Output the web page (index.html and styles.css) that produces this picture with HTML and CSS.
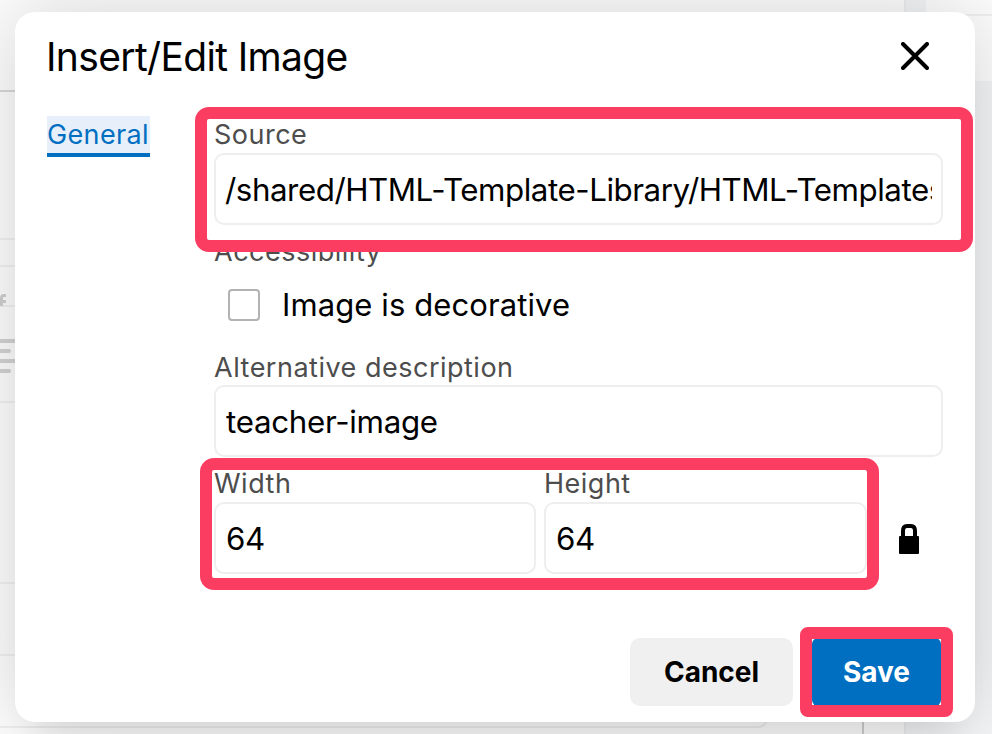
FILE: index.html
```
<!DOCTYPE html>
<html lang="en">
<head>
  <meta charset="utf-8">
  <title>Insert/Edit Image</title>
  <link rel="stylesheet" href="styles.css">
</head>
<body>
  <!-- editor page behind the dialog -->
  <svg class="backdrop" width="992" height="734" viewBox="0 0 992 734">
    <rect width="992" height="734" fill="#fdfdfd"/>
    <rect x="904" width="2" height="734" fill="#eeeeee"/>
    <rect x="906" width="20" height="734" fill="#f3f5f7"/>
    <rect x="926" y="81" width="66" height="653" fill="#f3f5f7"/>
    <rect x="926" y="14" width="66" height="2" fill="#f0f0f0"/>
    <rect y="90" width="30" height="2" fill="#d8d8d8"/>
    <g fill="#f1f1f1">
      <rect y="238" width="30" height="2"/>
      <rect y="265" width="30" height="2"/>
      <rect y="305" width="30" height="2"/>
      <rect y="401" width="30" height="2"/>
      <rect y="582" width="30" height="2"/>
      <rect y="654" width="30" height="2"/>
    </g>
    <path d="M0 727H757Q765 727 767 720" fill="none" stroke="#efefef" stroke-width="2"/>
    <rect x="862" y="715" width="2" height="19" fill="#cfcfcf"/>
    <g fill="#d3d3d3">
      <rect y="339" width="30" height="4"/>
      <rect x="-4" y="349" width="15" height="4" rx="2"/>
      <rect y="359" width="30" height="4"/>
      <rect x="-4" y="369" width="15" height="4" rx="2"/>
    </g>
    <path d="M6 295.500H4Q1.500 295.500 1.500 298V306M-2 301.500H6" fill="none" stroke="#cfcfcf" stroke-width="3"/>
  </svg>

  <div class="dialog">
    <div class="dialog-header">
      <h1>Insert/Edit Image</h1>
      <button class="btn-close" aria-label="Close">
        <svg width="28" height="28" viewBox="0 0 28 28">
          <path d="M2 2L26 26M26 2L2 26" stroke="#000" stroke-width="4" stroke-linecap="round"/>
        </svg>
      </button>
    </div>

    <div class="dialog-body">
      <div class="nav"><a class="tab">General</a></div>
      <form class="fields">
        <div class="form-group source">
          <label for="source">Source</label>
          <input type="text" id="source" value="/shared/HTML-Template-Library/HTML-Templates/images">
          <div class="mark mark-source"></div>
        </div>
        <div class="form-group">
          <label>Accessibility</label>
          <div class="check">
            <span class="box"></span>
            <span class="check-text">Image is decorative</span>
          </div>
        </div>
        <div class="form-group alt">
          <label for="alt">Alternative description</label>
          <input type="text" id="alt" value="teacher-image">
        </div>
        <div class="size">
          <div class="form-group">
            <label for="width">Width</label>
            <input type="text" id="width" value="64">
          </div>
          <div class="form-group">
            <label for="height">Height</label>
            <input type="text" id="height" value="64">
          </div>
          <svg class="lock" width="20" height="30" viewBox="0 0 20 30">
            <path d="M4 14V7Q4 2 8 2H12Q16 2 16 7V14" fill="none" stroke="#000" stroke-width="4"/>
            <rect y="12" width="20" height="18" rx="1" fill="#000"/>
          </svg>
          <div class="mark mark-size"></div>
        </div>
      </form>
    </div>

    <div class="dialog-footer">
      <button class="btn">Cancel</button>
      <div class="save">
        <button class="btn btn-save">Save</button>
        <div class="mark mark-save"></div>
      </div>
    </div>
  </div>
</body>
</html>
```

FILE: styles.css
```
* {
  box-sizing: border-box;
}

body {
  margin: 0;
  padding: 12px 17px 12px 15px;
  height: 734px;
  overflow: hidden;
  font-family: Inter, "Liberation Sans", sans-serif;
  color: #000;
}

.backdrop {
  position: absolute;
  top: 0;
  left: 0;
  z-index: -1;
}

.dialog {
  display: flex;
  flex-direction: column;
  height: 710px;
  padding: 0 32px 16px;
  background-color: #fff;
  border-radius: 20px;
  box-shadow: 0 32px 32px -20px rgba(0, 0, 0, 0.08), 0 0 80px 2px rgba(0, 0, 0, 0.16);
}

.dialog-header {
  display: flex;
  justify-content: space-between;
  align-items: center;
  height: 88px;
  padding-right: 14px;
}

h1 {
  margin: 0 0 0 -1px;
  font-size: 39px;
  font-weight: 400;
  line-height: 48px;
  letter-spacing: -0.65px;
  padding-top: 2px;
}

button {
  font-family: inherit;
  border: none;
  cursor: pointer;
}

.btn-close {
  display: flex;
  padding: 0;
  background: none;
}

.dialog-body {
  display: flex;
  flex: 1;
  padding-top: 16px;
}

.nav {
  width: 167px;
}

.tab {
  display: inline-block;
  width: 103px;
  height: 41px;
  border-bottom: 4px solid #006fc1;
  background-color: #e7effa;
  color: #006fc1;
  font-size: 27px;
  line-height: 37px;
  letter-spacing: 0.35px;
  white-space: nowrap;
}

.fields {
  flex: 1;
  padding-top: 1px;
}

.form-group label {
  display: block;
  height: 36px;
  font-size: 27px;
  line-height: 35px;
  letter-spacing: 0.5px;
  color: #4d4d4d;
  white-space: nowrap;
}

input[type="text"] {
  display: block;
  width: 100%;
  height: 72px;
  padding: 2px 9px 0 10px;
  border: 2px solid #eee;
  border-radius: 10px;
  background-color: #fff;
  color: #000;
  font-family: inherit;
  font-size: 31.3px;
  letter-spacing: -0.3px;
}

#source {
  padding-left: 9px;
  letter-spacing: -0.45px;
}

.source {
  position: relative;
  margin-bottom: 9px;
}

.check {
  display: flex;
  align-items: center;
  gap: 22px;
  height: 70px;
  padding-left: 14px;
}

.box {
  width: 32px;
  height: 32px;
  border: 2px solid #b2b2b2;
  border-radius: 4px;
}

.check-text {
  font-size: 31px;
  line-height: 40px;
  letter-spacing: 0.1px;
}

.alt {
  margin: 9px 0;
}

.alt label {
  line-height: 37px;
}

.size {
  position: relative;
  display: grid;
  grid-template-columns: 322px 323px 20px;
  column-gap: 8px;
}

.lock {
  margin: 58px 0 0 24px;
}

/* highlight frames */
.mark {
  position: absolute;
  border: 12px solid #fc3d62;
  border-radius: 14px;
  pointer-events: none;
}

.mark-source {
  top: -10px;
  left: -19px;
  width: 778px;
  height: 145px;
}

.mark-size {
  top: -8px;
  left: -14px;
  width: 679px;
  height: 132px;
}

.mark-save {
  top: -11px;
  left: -12px;
  width: 153px;
  height: 90px;
  border-radius: 8px;
}

.dialog-footer {
  display: flex;
  justify-content: flex-end;
  gap: 19px;
  padding-right: 2px;
}

.btn {
  width: 163px;
  height: 68px;
  padding: 0;
  border-radius: 10px;
  background-color: #f0f0f0;
  color: #000;
  font-size: 28px;
  font-weight: 700;
}

.save {
  position: relative;
}

.btn-save {
  display: block;
  width: 129px;
  border-radius: 6px;
  background-color: #006fc1;
  color: #fff;
}
```
